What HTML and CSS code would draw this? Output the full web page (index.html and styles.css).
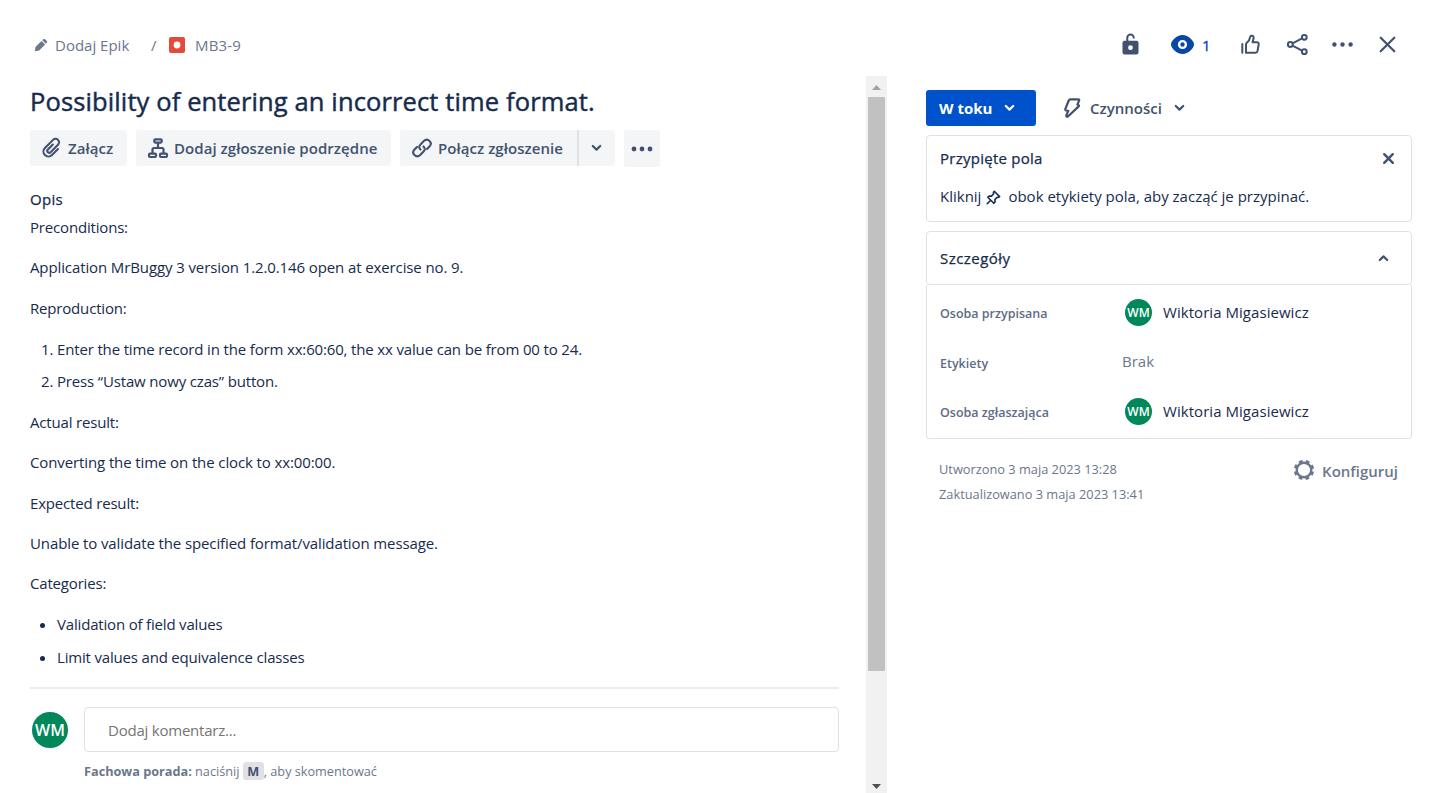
FILE: index.html
```html
<!DOCTYPE html>
<html lang="pl">
<head>
<meta charset="utf-8">
<title>MB3-9</title>
<link rel="stylesheet" href="styles.css">
</head>
<body>
<div class="issue">
  <header class="topbar">
    <nav class="crumbs">
      <svg class="pencil" width="14" height="14" viewBox="0 0 14 14"><path d="M.8 13.200l.8-4.400L7.600 2.900l3.500 3.500L5.200 12.400zM8.300 2.200l1-1q.9-.8 1.800 0l1.700 1.700q.8.900 0 1.800l-1 1z" fill="currentColor"/></svg>
      <span class="crumb epic">Dodaj Epik</span>
      <span class="crumb slash">/</span>
      <svg class="bug" width="16" height="16" viewBox="0 0 16 16"><rect width="16" height="16" rx="2" fill="#e5493a"/><circle cx="8" cy="8" r="3.400" fill="#fff"/></svg>
      <span class="crumb key">MB3-9</span>
    </nav>
    <div class="tools">
      <svg class="tool lock" width="27" height="27" viewBox="0 0 27 27"><path d="M10.300 10.500V6.600a3.200 3.200 0 0 1 6.400 0v.8" fill="none" stroke="currentColor" stroke-width="2"/><path fill-rule="evenodd" d="M7.500 9.800h12q2 0 2 2v9.700q0 2-2 2h-12q-2 0-2-2v-9.700q0-2 2-2zm6 4.500a2.400 2.400 0 1 0 0 4.800 2.400 2.400 0 0 0 0-4.800z" fill="currentColor"/></svg>
      <svg class="tool eye" width="27" height="27" viewBox="0 0 27 27"><path d="M13.500 4C7.500 4 2 10 2 13.500S7.500 23 13.500 23 25 17 25 13.500 19.500 4 13.500 4z" fill="#0747a6"/><circle cx="13.500" cy="13.500" r="3.400" fill="none" stroke="#fff" stroke-width="2.400"/></svg>
      <span class="watchers">1</span>
      <svg class="tool thumb" width="27" height="27" viewBox="0 0 27 27"><g fill="none" stroke="currentColor" stroke-width="2" stroke-linecap="round" stroke-linejoin="round"><path d="M5.300 13v8.700"/><path d="M9 21.700v-8.200q0-1 .8-1.700c2-1.800 3-3 3.300-5.700.3-2 3.600-2 3.500.8-.1 1.600-.6 2.900-1.100 4.300h4.400q2.100.2 1.800 2.200l-1.200 6.600q-.4 1.700-2 1.700H9"/></g></svg>
      <svg class="tool share" width="27" height="27" viewBox="0 0 27 27"><g fill="none" stroke="currentColor" stroke-width="2"><circle cx="6.300" cy="13.500" r="2.400"/><circle cx="20.300" cy="6.300" r="2.400"/><circle cx="20.300" cy="20.700" r="2.400"/><path d="M8.500 12.300l9.600-4.900M8.500 14.700l9.600 4.900"/></g></svg>
      <svg class="tool more" width="27" height="27" viewBox="0 0 27 27"><g fill="currentColor"><circle cx="5.400" cy="13.500" r="2.200"/><circle cx="13.500" cy="13.500" r="2.200"/><circle cx="21.600" cy="13.500" r="2.200"/></g></svg>
      <svg class="tool" width="27" height="27" viewBox="0 0 27 27"><path d="M6.700 6.700l13.600 13.600M20.300 6.700L6.700 20.300" stroke="currentColor" stroke-width="2.200" stroke-linecap="round"/></svg>
    </div>
  </header>

  <div class="columns">
    <main class="content">
      <h1 class="title">Possibility of entering an incorrect time format.</h1>
      <div class="actions">
        <button class="btn attach"><svg width="22" height="22" viewBox="0 0 22 22"><path d="M16 7.500V16a5 5 0 0 1-10 0V4.500a3.500 3.500 0 0 1 7 0V15a1.900 1.900 0 0 1-3.800 0V8" transform="rotate(45 11 11)" fill="none" stroke="currentColor" stroke-width="2.100" stroke-linecap="round"/></svg><span>Załącz</span></button>
        <button class="btn child"><svg width="22" height="22" viewBox="0 0 22 22"><g fill="none" stroke="currentColor" stroke-width="2.200"><rect x="7.300" y="2.300" width="7.400" height="3.300" rx="1"/><rect x="2" y="16.700" width="7" height="3.300" rx="1"/><rect x="13" y="16.700" width="7" height="3.300" rx="1"/><path d="M11 6v5M5.500 16v-3.500q0-1.500 1.500-1.500h8q1.500 0 1.500 1.500V16"/></g></svg><span>Dodaj zgłoszenie podrzędne</span></button>
        <div class="split">
          <button class="btn link"><svg width="22" height="22" viewBox="0 0 22 22"><g fill="none" stroke="currentColor" stroke-width="2.100" stroke-linecap="round"><path d="M9.500 12.600c-1.900-1.900-1.500-3.800 0-5.200l3.300-3.400c4-3.600 9.400 1.600 5.700 5.500l-2.500 2.600"/><path d="M12.500 9.400c1.900 1.900 1.500 3.800 0 5.200l-3.300 3.400c-4 3.600-9.400-1.600-5.700-5.500L6 9.900"/></g></svg><span>Połącz zgłoszenie</span></button>
          <button class="btn drop"><svg width="11" height="8" viewBox="0 0 11 8"><path d="M1.800 2l3.700 3.600L9.200 2" class="chev"/></svg></button>
        </div>
        <button class="btn dots"><svg width="22" height="8" viewBox="0 0 22 8"><g fill="currentColor"><circle cx="3" cy="4" r="2.400"/><circle cx="11" cy="4" r="2.400"/><circle cx="19" cy="4" r="2.400"/></g></svg></button>
      </div>

      <h2 class="label">Opis</h2>
      <div class="description">
        <p class="tight">Preconditions:</p>
        <p>Application MrBuggy 3 version 1.2.0.146 open at exercise no. 9.</p>
        <p class="tight">Reproduction:</p>
        <ol>
          <li>Enter the time record in the form xx:60:60, the xx value can be from 00 to 24.</li>
          <li>Press “Ustaw nowy czas” button.</li>
        </ol>
        <p class="tight">Actual result:</p>
        <p>Converting the time on the clock to xx:00:00.</p>
        <p class="tight">Expected result:</p>
        <p>Unable to validate the specified format/validation message.</p>
        <p class="tight">Categories:</p>
        <ul>
          <li>Validation of field values</li>
          <li>Limit values and equivalence classes</li>
        </ul>
      </div>

      <div class="comment">
        <span class="avatar big">WM</span>
        <div class="comment-body">
          <div class="comment-box">Dodaj komentarz...</div>
          <div class="hint"><b>Fachowa porada:</b> naciśnij <kbd>M</kbd>, aby skomentować</div>
        </div>
      </div>
    </main>

    <div class="scrollbar">
      <svg width="21" height="21" viewBox="0 0 21 21"><path d="M6 14l4.500-5 4.500 5z" fill="#a3a3a3"/></svg>
      <div class="thumb-bar"></div>
      <svg class="down" width="21" height="14" viewBox="0 0 21 14"><path d="M6 5h9l-4.500 5z" fill="#505050"/></svg>
    </div>

    <aside class="side">
      <div class="status-row">
        <button class="status"><span>W toku</span><svg width="11" height="8" viewBox="0 0 11 8"><path d="M1.800 2l3.700 3.600L9.200 2" class="chev"/></svg></button>
        <button class="automation"><svg width="18" height="20" viewBox="0 0 18 20"><path d="M7.300 1.300h7.900q1.300.1.900 1.300L14.400 6.600l.9.300q1 .5.400 1.500L5.200 18.300q-1.800 1.300-2-.6l2.100-4.800-2-.4q-1.300-.4-.9-1.600L5.700 2.500Q6.200 1.300 7.300 1.300z" fill="none" stroke="currentColor" stroke-width="2.200" stroke-linejoin="round"/></svg><span>Czynności</span><svg width="11" height="8" viewBox="0 0 11 8"><path d="M1.800 2l3.700 3.600L9.200 2" class="chev"/></svg></button>
      </div>

      <section class="card pinned">
        <div class="card-head"><h3>Przypięte pola</h3><svg width="13" height="13" viewBox="0 0 13 13"><path d="M2.200 2.200l8.600 8.600M10.800 2.200l-8.600 8.600" stroke="#42526e" stroke-width="2.400" stroke-linecap="round"/></svg></div>
        <p class="pin-text">Kliknij <svg class="pin" width="15" height="15" viewBox="0 0 15 15"><path d="M8.300 1.300l5.300 5.300-1.400.9-1-.2-2.300 2.300.2 2.300-1.300 1.400L1.800 7.200 3.200 6l2.300.100 2.200-2.300-.3-1.300zM4.700 10.200L1.200 13.700" fill="none" stroke="#172b4d" stroke-width="1.600" stroke-linejoin="round" stroke-linecap="round"/></svg> obok etykiety pola, aby zacząć je przypinać.</p>
      </section>

      <section class="card details-head"><h3>Szczegóły</h3><svg width="11" height="8" viewBox="0 0 11 8"><path d="M1.800 6l3.700-3.600L9.200 6" class="chev"/></svg></section>
      <div class="details">
        <div class="field"><span class="name">Osoba przypisana</span><span class="avatar">WM</span><span class="person">Wiktoria Migasiewicz</span></div>
        <div class="field"><span class="name">Etykiety</span><span class="none">Brak</span></div>
        <div class="field"><span class="name">Osoba zgłaszająca</span><span class="avatar">WM</span><span class="person">Wiktoria Migasiewicz</span></div>
      </div>

      <footer class="meta">
        <div class="dates"><div>Utworzono 3 maja 2023 13:28</div><div>Zaktualizowano 3 maja 2023 13:41</div></div>
        <div class="configure"><svg width="22" height="22" viewBox="0 0 22 22"><g fill="none" stroke="currentColor"><circle cx="11" cy="11" r="7.300" stroke-width="2.400"/><circle cx="11" cy="11" r="9" stroke-width="2.400" stroke-dasharray="3.800 3.268" transform="rotate(10.400 11 11)"/></g></svg><span>Konfiguruj</span></div>
      </footer>
    </aside>
  </div>
</div>
</body>
</html>
```
FILE: styles.css
```css
* { box-sizing: border-box; }
body {
  margin: 0;
  background: #fff;
  color: #172b4d;
  font: 400 15px/24px "Open Sans", "Noto Sans", sans-serif;
  overflow: hidden;
}
h1, h2, h3, p, ol, ul { margin: 0; padding: 0; }
button { border: 0; padding: 0; background: none; color: #42526e; font: inherit; font-weight: 600; }
svg { display: block; flex: none; }
.chev { fill: none; stroke: currentColor; stroke-width: 2.2; stroke-linecap: round; stroke-linejoin: round; }

.issue { height: 793px; display: flex; flex-direction: column; }
.topbar { height: 76px; flex: none; display: flex; justify-content: space-between; padding: 31px 30px 0 34px; }
.crumbs { display: flex; color: #6b778c; height: 28px; align-items: center; white-space: nowrap; }
.epic { margin-left: 7px; width: 96px; }
.slash { width: 18px; }
.key { margin-left: 10px; letter-spacing: 0.150px; }
.tools { display: flex; color: #42526e; height: 27px; align-items: center; }
.eye { margin-left: 25px; }
.watchers { color: #0747a6; width: 8px; margin-left: 6px; -webkit-text-stroke: 0.3px #0747a6; }
.thumb { margin-left: 27px; }
.share { margin-left: 20px; }
.more { margin: 0 18px; }

.columns { flex: 1; display: flex; min-height: 0; }
.content { width: 866px; flex: none; padding: 7px 27px 0 30px; }
.title { font-size: 25.500px; line-height: 36px; font-weight: 400; letter-spacing: 0.120px; -webkit-text-stroke: 0.45px #172b4d; white-space: nowrap; }
.actions { display: flex; gap: 9px; margin-top: 11px; }
.btn { height: 36px; display: flex; align-items: center; background: #f4f5f7; border-radius: 3px; white-space: nowrap; }
.btn span { margin-left: 5px; letter-spacing: 0.050px; }
.attach { width: 97px; padding-left: 11px; }
.child { width: 255px; padding-left: 11px; }
.split { display: flex; }
.link { width: 177px; padding-left: 11px; border-radius: 3px 0 0 3px; }
.drop { width: 38px; border-left: 2px solid #dfe1e6; border-radius: 0 3px 3px 0; justify-content: center; padding-right: 2px; }
.dots { width: 36px; justify-content: center; height: 37px; margin-bottom: -1px; padding-right: 1px; }
.label { font-size: 15px; line-height: 24px; font-weight: 400; letter-spacing: 0.300px; -webkit-text-stroke: 0.25px #172b4d; margin-top: 21px; }
.description { margin-top: 4px; height: 474px; border-bottom: 2px solid #ebecf0; white-space: nowrap; letter-spacing: -0.110px; }
.description p + p { margin-top: 16.300px; }
.description .tight, .description ul { letter-spacing: -0.180px; }
.description ol, .description ul { padding-left: 27px; margin: 17.200px 0 16.700px; }
.description ol { letter-spacing: -0.155px; }
.description li + li { margin-top: 8.500px; }
.description ul li + li { margin-top: 9px; }

.comment { display: flex; margin-top: 18px; }
.avatar { width: 27px; height: 27px; border-radius: 50%; background: #00875a; color: #fff; font-size: 12px; font-weight: 600; display: flex; align-items: center; justify-content: center; flex: none; }
.avatar.big { width: 36px; height: 36px; font-size: 16px; margin: 5px 16px 0 2px; }
.comment-body { flex: 1; }
.comment-box { height: 45px; border: 1px solid #dfe1e6; border-radius: 4px; padding: 10px 23px; color: #757575; letter-spacing: -0.220px; }
.hint { font-size: 12.700px; line-height: 20px; margin-top: 9px; color: #6b778c; white-space: nowrap; }
kbd { font: inherit; font-weight: 700; display: inline-block; line-height: 18px; width: 21px; text-align: center; background: #dfe1e6; color: #42526e; border-radius: 3px; }

.scrollbar { width: 21px; flex: none; background: #f1f1f1; display: flex; flex-direction: column; }
.thumb-bar { height: 574px; margin: 0 2px; background: #c1c1c1; }
.down { margin-top: auto; }

.side { width: 486px; margin-left: 39px; padding-top: 14px; }
.status-row { display: flex; height: 36px; }
.status { width: 110px; background: #0052cc; color: #fff; border-radius: 3px; display: flex; align-items: center; padding-left: 13px; font-weight: 700; }
.status svg { margin-left: 12px; }
.automation { display: flex; align-items: center; margin-left: 27px; }
.automation span { margin: 0 12px 0 9px; }
.card { border: 1px solid #dfe1e6; border-radius: 4px; }
.card svg { color: #42526e; }
.card h3 { font-size: 15px; font-weight: 400; line-height: 24px; letter-spacing: 0.260px; -webkit-text-stroke: 0.25px #172b4d; }
.pinned { height: 87px; margin-top: 9px; padding: 10px 16px 0 13px; }
.card-head { display: flex; justify-content: space-between; align-items: center; }
.pin-text { display: flex; align-items: center; margin-top: 14px; white-space: nowrap; }
.pin { margin: 2px 7px 0 5px; }
.details-head { margin-top: 9px; height: 54px; display: flex; align-items: center; justify-content: space-between; padding: 0 22px 0 13px; }
.details-head h3 { letter-spacing: 0.450px; }
.details { border: 1px solid #dfe1e6; border-top: 0; border-radius: 0 0 4px 4px; height: 154px; padding: 3px 13px 0; }
.field { height: 49.500px; display: flex; align-items: center; white-space: nowrap; }
.name { width: 182px; font-size: 12.500px; font-weight: 600; color: #5e6c84; padding-top: 3px; }
.person { padding-bottom: 2px; letter-spacing: 0.050px; }
.field .avatar { margin: 0 11px 0 3px; }
.none { color: #6b778c; margin-top: -2px; }
.meta { display: flex; justify-content: space-between; color: #6b778c; padding: 18px 14px 0 13px; }
.dates { font-size: 12.800px; line-height: 25px; }
.configure { display: flex; align-items: center; height: 26px; font-weight: 600; }
.configure span { margin: 1px 0 0 7px; }
```
